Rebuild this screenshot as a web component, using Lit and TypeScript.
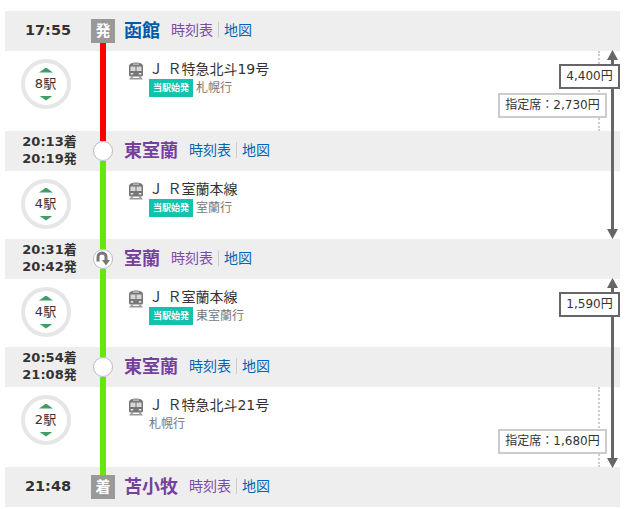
import { LitElement, html, css, nothing } from "lit";
import { customElement } from "lit/decorators.js";

const RED = "#ff0000";
const GREEN = "#66e60f";

type Stop = {
  times: string[];
  name: string;
  nameVisited: boolean;
  ttVisited: boolean;
  marker: "dep" | "arr" | "plain" | "transfer";
  top?: string;
  bottom?: string;
};
type Leg = {
  count: string;
  train: string;
  dest: string;
  first: boolean;
  seat?: string;
  tall: boolean;
};

const stops: Stop[] = [
  { times: ["17:55"], name: "函館", nameVisited: false, ttVisited: true, marker: "dep", bottom: RED },
  { times: ["20:13着", "20:19発"], name: "東室蘭", nameVisited: true, ttVisited: false, marker: "plain", top: RED, bottom: GREEN },
  { times: ["20:31着", "20:42発"], name: "室蘭", nameVisited: true, ttVisited: true, marker: "transfer", top: GREEN, bottom: GREEN },
  { times: ["20:54着", "21:08発"], name: "東室蘭", nameVisited: true, ttVisited: false, marker: "plain", top: GREEN, bottom: GREEN },
  { times: ["21:48"], name: "苫小牧", nameVisited: true, ttVisited: true, marker: "arr", top: GREEN },
];
const legs: (Leg & { color: string })[] = [
  { count: "8駅", train: "Ｊ Ｒ特急北斗19号", dest: "札幌行", first: true, seat: "指定席：2,730円", tall: true, color: RED },
  { count: "4駅", train: "Ｊ Ｒ室蘭本線", dest: "室蘭行", first: true, tall: false, color: GREEN },
  { count: "4駅", train: "Ｊ Ｒ室蘭本線", dest: "東室蘭行", first: true, tall: false, color: GREEN },
  { count: "2駅", train: "Ｊ Ｒ特急北斗21号", dest: "札幌行", first: false, seat: "指定席：1,680円", tall: true, color: GREEN },
];
const fares = [
  { price: "4,400円", top: 39, height: 189 },
  { price: "1,590円", top: 267, height: 190 },
];

@customElement("app-root")
export class AppRoot extends LitElement {
  static styles = css`
    :host {
      display: block;
      padding: 11px 7px 0 5px;
      background: #fff;
      font-family: "DejaVu Sans", "Noto Sans CJK JP", sans-serif;
      color: #333;
    }
    .route { position: relative; }
    .stop, .leg { display: grid; grid-template-columns: 86px 24px 1fr; }
    .stop { height: 40px; background: #eee; align-items: stretch; }
    .leg { position: relative; background: #fff; }
    .leg.tall { height: 80px; }
    .leg.short { height: 68px; }
    .time {
      display: flex; flex-direction: column; justify-content: center; align-items: center;
      font-weight: 700; font-size: 13px; line-height: 17px; color: #333; padding: 0 0 2px 3px;
    }
    .time.single { font-size: 14.5px; padding-left: 0; }
    .rail { display: flex; flex-direction: column; align-items: center; }
    .seg { flex: 1; width: 6px; }
    .mark {
      flex: none; width: 24px; height: 24px; background: #999; color: #fff;
      font-size: 15px; font-weight: 700; line-height: 24px; text-align: center;
    }
    .circle {
      flex: none; width: 20px; height: 20px; box-sizing: border-box; border-radius: 50%;
      background: #fff; border: 1px solid #bbb;
      display: flex; align-items: center; justify-content: center;
    }
    .station { display: flex; align-items: center; padding: 0 0 2px 9px; }
    .name { font-size: 18px; font-weight: 700; color: #0058a9; margin: 0 11px 3px 0; }
    .name.v { color: #75409e; }
    .lnk { font-size: 14px; color: #0066b3; line-height: 16px; }
    .lnk.v { color: #7b4ba8; }
    .lnk.tt { padding-right: 5px; border-right: 1px solid #ccc; margin-right: 5px; }
    .count { padding: 8px 0 0 16px; }
    .ring {
      width: 50px; height: 50px; box-sizing: border-box; border-radius: 50%;
      border: 4px solid #e6e6e6; display: flex; flex-direction: column;
      align-items: center; justify-content: center; gap: 3px;
      font-size: 13px; color: #333;
    }
    .num { height: 17px; line-height: 15px; margin-right: 1px; }
    .tri { width: 14px; height: 5px; background: #3f9e62; }
    .tri.up { clip-path: polygon(50% 0, 100% 100%, 0 100%); }
    .tri.down { clip-path: polygon(0 0, 100% 0, 50% 100%); }
    .info { display: grid; grid-template-columns: 21px auto 1fr; grid-template-rows: 18px 18px; padding: 10px 0 0 13px; align-content: start; }
    .train-icon { width: 16px; height: 18px; margin-top: 1px; display: block; grid-row: 1 / span 2; }
    .train { font-size: 14px; line-height: 17px; color: #333; white-space: nowrap; }
    .sub { grid-column: 2; display: flex; align-items: center; gap: 3px; font-size: 12px; color: #777; height: 18px; }
    .dest { margin-bottom: 4px; }
    .first { width: 44px; height: 18px; background: #12c2ac; color: #fff; font-size: 9px; font-weight: 700; line-height: 18px; text-align: center; }
    .dots { position: absolute; top: 0; bottom: 0; right: 20px; width: 0; border-right: 2px dotted #ccc; }
    .seat {
      position: absolute; top: 42px; right: 13px; box-sizing: border-box; height: 25px; width: 109px;
      border: 2px solid #ccc; background: #fff; font-size: 12px; line-height: 21px; text-align: center; color: #333;
    }
    .fare { position: absolute; right: 0; width: 16px; }
    .shaft { position: absolute; left: 7px; width: 3px; top: 6px; bottom: 6px; background: #666; }
    .head { position: absolute; left: 3px; width: 11px; height: 10px; background: #666; }
    .head.top { top: 0; clip-path: polygon(50% 0, 100% 100%, 0 100%); }
    .head.bot { bottom: 0; clip-path: polygon(0 0, 100% 0, 50% 100%); }
    .price {
      position: absolute; top: 14px; right: 0; width: 61px; height: 25px; box-sizing: border-box;
      border: 2px solid #666; background: #fff; font-size: 12px; line-height: 21px; text-align: center; color: #333;
    }
  `;

  private marker(s: Stop) {
    if (s.marker === "dep") return html`<div class="mark">発</div>`;
    if (s.marker === "arr") return html`<div class="mark">着</div>`;
    if (s.marker === "transfer")
      return html`<div class="circle">
        <svg width="16" height="16" viewBox="0 0 16 16" fill="none">
          <path d="M3 10.5V6a4 4 0 0 1 8 0V9.5" stroke="#777" stroke-width="3" />
          <path d="M7 9h8L11 14.5z" fill="#777" />
        </svg>
      </div>`;
    return html`<div class="circle"></div>`;
  }

  private stop(s: Stop) {
    return html`<div class="stop">
      <div class="time ${s.times.length === 1 ? "single" : ""}">
        ${s.times.map((t) => html`<div>${t}</div>`)}
      </div>
      <div class="rail">
        <div class="seg" style="background:${s.top ?? "transparent"}"></div>
        ${this.marker(s)}
        <div class="seg" style="background:${s.bottom ?? "transparent"}"></div>
      </div>
      <div class="station">
        <span class="name ${s.nameVisited ? "v" : ""}">${s.name}</span>
        <span class="lnk tt ${s.ttVisited ? "v" : ""}">時刻表</span>
        <span class="lnk">地図</span>
      </div>
    </div>`;
  }

  private leg(l: Leg & { color: string }) {
    return html`<div class="leg ${l.tall ? "tall" : "short"}">
      <div class="count">
        <div class="ring">
          <div class="tri up"></div>
          <div class="num">${l.count}</div>
          <div class="tri down"></div>
        </div>
      </div>
      <div class="rail"><div class="seg" style="background:${l.color}"></div></div>
      <div class="info">
        <svg class="train-icon" viewBox="0 0 16 18">
          <path d="M1 4C1 1.5 5 .5 8 .5s7 1 7 3.5v9a1.5 1.5 0 0 1-1.5 1.5h-11A1.5 1.5 0 0 1 1 13z" fill="#777" />
          <rect x="5" y="1.6" width="6" height="1" fill="#ddd" />
          <rect x="2.5" y="4.5" width="11" height="4.5" fill="#d8d8d8" />
          <rect x="7.5" y="4" width="1" height="6" fill="#777" />
          <rect x="2.8" y="11" width="2.4" height="1.6" fill="#e8e8e8" />
          <rect x="10.8" y="11" width="2.4" height="1.6" fill="#e8e8e8" />
          <path d="M3.5 14.5h2.2L4.6 16h6.8l-1.1-1.5h2.2l2.5 3H1z" fill="#999" />
        </svg>
        <div class="train">${l.train}</div>
        <div class="sub">
          ${l.first ? html`<span class="first">当駅始発</span>` : nothing}
          <span class="dest">${l.dest}</span>
        </div>
      </div>
      ${l.seat ? html`<div class="dots"></div><div class="seat">${l.seat}</div>` : nothing}
    </div>`;
  }

  render() {
    return html`<div class="route">
      ${stops.map((s, i) => html`${this.stop(s)}${legs[i] ? this.leg(legs[i]) : nothing}`)}
      ${fares.map(
        (f) => html`<div class="fare" style="top:${f.top}px;height:${f.height}px">
          <div class="shaft"></div>
          <div class="head top"></div>
          <div class="head bot"></div>
          <div class="price">${f.price}</div>
        </div>`
      )}
    </div>`;
  }
}
